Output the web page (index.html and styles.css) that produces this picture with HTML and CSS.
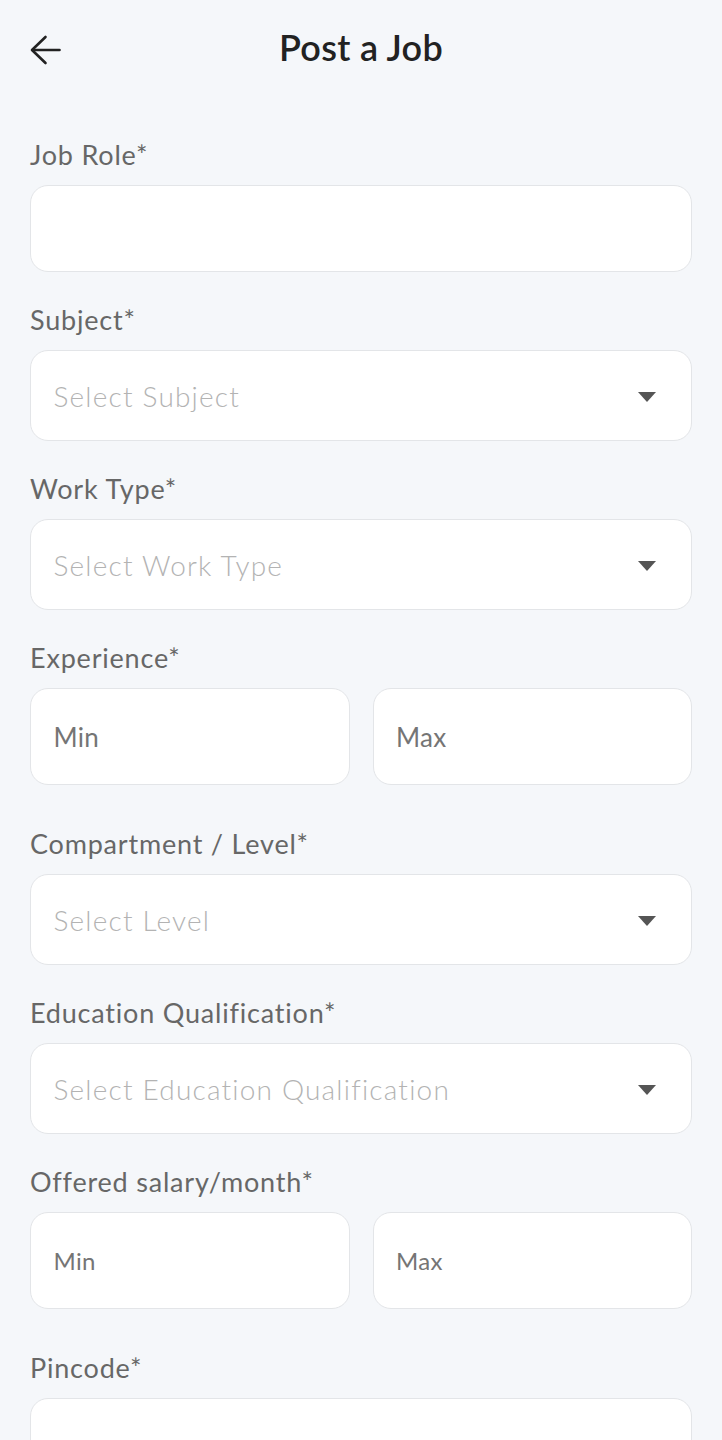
FILE: index.html
```html
<!DOCTYPE html>
<html lang="en">
<head>
<meta charset="utf-8">
<title>Post a Job</title>
<link rel="stylesheet" href="styles.css">
</head>
<body>
<header class="topbar">
  <button class="back" aria-label="Back">
    <svg width="32" height="32" viewBox="0 0 32 32" fill="none" stroke="#222" stroke-width="2.6" stroke-linecap="round" stroke-linejoin="round">
      <path d="M2.5 15h27"/>
      <path d="M15.5 2L2 15l13.5 13"/>
    </svg>
  </button>
  <h1 class="title">Post a Job</h1>
  <span></span>
</header>

<main class="form">
  <div class="group">
    <label class="label">Job Role*</label>
    <div class="box box-text"></div>
  </div>

  <div class="group">
    <label class="label">Subject*</label>
    <div class="box box-select"><span class="placeholder">Select Subject</span><span class="caret"></span></div>
  </div>

  <div class="group">
    <label class="label">Work Type*</label>
    <div class="box box-select"><span class="placeholder">Select Work Type</span><span class="caret"></span></div>
  </div>

  <div class="group group-pair">
    <label class="label">Experience*</label>
    <div class="pair">
      <div class="box box-half"><span class="value">Min</span></div>
      <div class="box box-half"><span class="value">Max</span></div>
    </div>
  </div>

  <div class="group">
    <label class="label">Compartment / Level*</label>
    <div class="box box-select"><span class="placeholder">Select Level</span><span class="caret"></span></div>
  </div>

  <div class="group">
    <label class="label">Education Qualification*</label>
    <div class="box box-select"><span class="placeholder">Select Education Qualification</span><span class="caret"></span></div>
  </div>

  <div class="group group-pair">
    <label class="label">Offered salary/month*</label>
    <div class="pair">
      <div class="box box-half"><span class="value value-sm">Min</span></div>
      <div class="box box-half"><span class="value value-sm">Max</span></div>
    </div>
  </div>

  <div class="group">
    <label class="label">Pincode*</label>
    <div class="box box-text"></div>
  </div>
</main>
</body>
</html>
```

FILE: styles.css
```css
* { box-sizing: border-box; }

html, body {
  margin: 0;
  padding: 0;
  background: #f5f7fa;
  font-family: "Lato", "Noto Sans", sans-serif;
}

body {
  width: 722px;
  height: 1440px;
  overflow: hidden;
}

.topbar {
  display: grid;
  grid-template-columns: 1fr auto 1fr;
  align-items: center;
  padding: 25px 30px 0;
  height: 69px;
}

.back {
  width: 32px;
  height: 32px;
  padding: 0;
  border: 0;
  background: none;
  display: flex;
  margin-top: 7px;
}

.title {
  margin: 0;
  font-size: 36px;
  line-height: 44px;
  font-weight: 600;
  color: #222;
  letter-spacing: 0.3px;
}

.form {
  display: flex;
  flex-direction: column;
  padding: 70px 30px 0;
}

.group {
  display: flex;
  flex-direction: column;
  gap: 14px;
  margin-bottom: 32px;
}

.group-pair {
  margin-bottom: 43px;
}

.label {
  font-size: 27px;
  line-height: 32px;
  color: #676767;
  letter-spacing: 0.8px;
}

.box {
  background: #fff;
  border: 1.5px solid #e3e5e8;
  border-radius: 18px;
  display: flex;
  align-items: center;
  padding: 0 22.5px;
}

.box-text { height: 87px; }

.box-select {
  height: 91px;
  justify-content: space-between;
  padding-right: 35px;
}

.placeholder {
  font-size: 28px;
  font-weight: 300;
  color: #b3b3b3;
  letter-spacing: 1.2px;
}

.caret {
  width: 0;
  height: 0;
  border-left: 9px solid transparent;
  border-right: 9px solid transparent;
  border-top: 10px solid #555;
  margin-top: 3px;
}

.pair {
  display: grid;
  grid-template-columns: 1fr 1fr;
  gap: 23px;
}

.box-half { height: 97px; }

.value {
  font-size: 26px;
  color: #757575;
  letter-spacing: 0.3px;
}

.value-sm { font-size: 24px; }
```
